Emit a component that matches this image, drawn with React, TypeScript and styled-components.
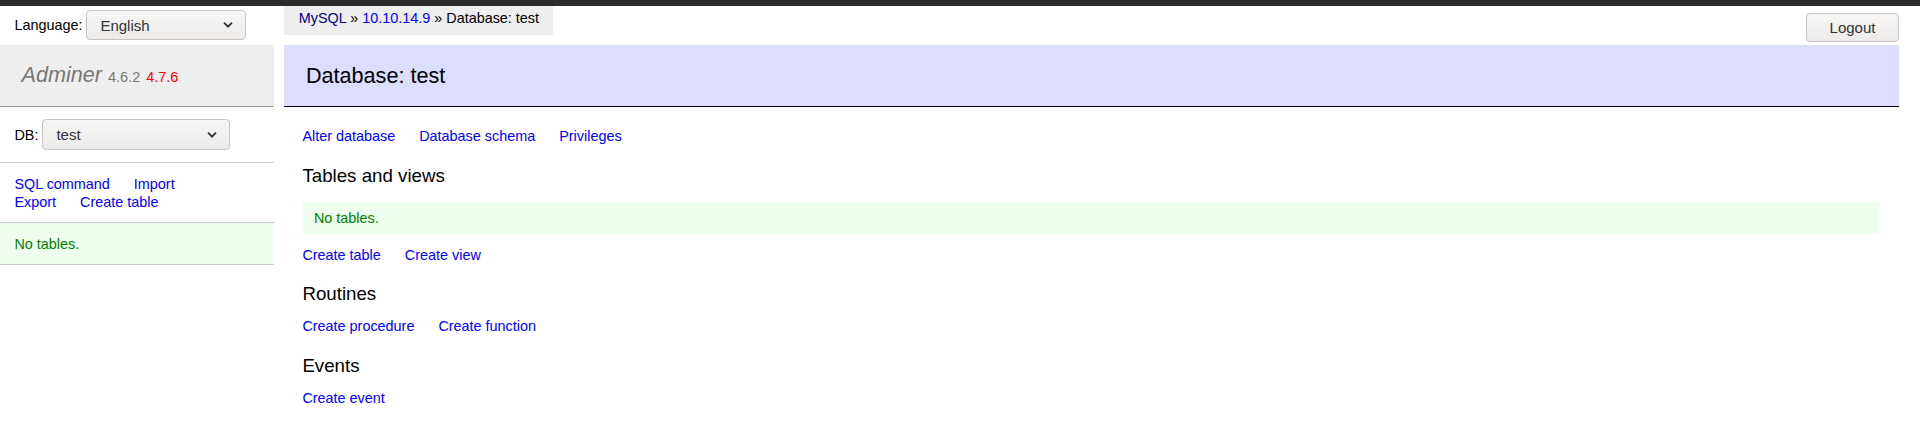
import React from "react";
import styled, { createGlobalStyle } from "styled-components";

const GlobalStyle = createGlobalStyle`
  html, body { margin: 0; padding: 0; background: #fff; }
  body {
    color: #000;
    font: 14.4px/1.25 "Liberation Sans", Arial, Helvetica, sans-serif;
  }
`;

const ChromeBar = styled.div`
  height: 6px;
  background: #2b2b2b;
`;

const Page = styled.div`
  display: flex;
  align-items: flex-start;
`;

const Sidebar = styled.aside`
  width: 273.6px;
  flex: none;
`;

const LangRow = styled.div`
  height: 38.8px;
  box-sizing: border-box;
  display: flex;
  align-items: center;
  gap: 4px;
  padding: 0 14.4px;
`;

const SelectWrap = styled.div<{ $width: number; $height: number }>`
  position: relative;
  width: ${(p) => p.$width}px;
  height: ${(p) => p.$height}px;
  flex: none;
`;

const NativeSelect = styled.select`
  appearance: none;
  -webkit-appearance: none;
  display: block;
  width: 100%;
  height: 100%;
  box-sizing: border-box;
  border: 1px solid #c8c5c1;
  border-radius: 4px;
  background: linear-gradient(#f7f6f5, #edebe9);
  font: 15px "Liberation Sans", Arial, sans-serif;
  color: #2e3436;
  padding: 0 30px 0 13px;
  outline: none;
`;

const Chevron = styled.svg`
  position: absolute;
  right: 13px;
  top: 50%;
  transform: translateY(-50%);
  pointer-events: none;
`;

const Brand = styled.h1`
  font-size: 21.6px;
  line-height: 1.25;
  margin: 0;
  padding: 17.28px 21.6px;
  border-bottom: 1px solid #999;
  font-weight: normal;
  color: #777;
  background: #eee;
`;

const BrandName = styled.a`
  color: #777;
  font-style: italic;
  text-decoration: none;
`;

const Version = styled.span<{ $new?: boolean }>`
  font-size: 67%;
  line-height: 1;
  color: ${(p) => (p.$new ? "red" : "#777")};
`;

const MenuBlock = styled.div<{ $message?: boolean }>`
  padding: 11.52px 14.4px;
  margin: 0;
  border-bottom: 1px solid #ccc;
  color: ${(p) => (p.$message ? "green" : "#000")};
  background: ${(p) => (p.$message ? "#efe" : "transparent")};
`;

const DbForm = styled.div`
  display: flex;
  align-items: center;
  gap: 4px;
  height: 32px;
`;

const Main = styled.main`
  flex: 1;
  min-width: 0;
  margin-left: 28.8px;
  padding-right: 21px;
`;

const TopRow = styled.div`
  display: flex;
  justify-content: space-between;
  align-items: flex-start;
  height: 38.8px;
`;

const Breadcrumb = styled.nav`
  margin-left: -18px;
  background: #eee;
  height: 28.8px;
  line-height: 25.92px;
  padding: 0 14.4px;
  white-space: nowrap;
`;

const Link = styled.a<{ $visited?: boolean }>`
  color: ${(p) => (p.$visited ? "navy" : "blue")};
  text-decoration: none;
`;

const LogoutButton = styled.button`
  margin-top: 7px;
  width: 93px;
  height: 29px;
  box-sizing: border-box;
  border: 1px solid #c8c5c1;
  border-radius: 4px;
  background: linear-gradient(#f7f6f5, #edebe9);
  color: #2e3436;
  font: 15px "Liberation Sans", Arial, sans-serif;
  padding: 0;
`;

const Title = styled.h2`
  font-size: 21.6px;
  line-height: 27px;
  margin: 0 0 20px -18px;
  padding: 17.28px 21.6px;
  border-bottom: 1px solid #000;
  color: #000;
  font-weight: normal;
  background: #ddf;
`;

const SectionTitle = styled.h3`
  font-weight: normal;
  font-size: 18.72px;
  line-height: 23.4px;
  margin: 18.72px 0 0;
`;

const Links = styled.p`
  margin: 11.52px 20px 0 0;
`;

const LinkItem = styled.a`
  color: blue;
  text-decoration: none;
  white-space: nowrap;
  margin-right: 20px;
`;

const SideLinks = styled.p`
  margin: 0;
  padding: 11.52px 14.4px;
  border-bottom: 1px solid #ccc;
`;

const Message = styled.div`
  padding: 7.2px 11.52px;
  margin: 14.4px 20px 0 0;
  color: green;
  background: #efe;
`;

function Select({ width, height, value }: { width: number; height: number; value: string }) {
  return (
    <SelectWrap $width={width} $height={height}>
      <NativeSelect defaultValue={value}>
        <option>{value}</option>
      </NativeSelect>
      <Chevron width="10" height="7" viewBox="0 0 10 7">
        <path d="M1 1.2 L5 5.2 L9 1.2" fill="none" stroke="#2e3436" strokeWidth="1.8" />
      </Chevron>
    </SelectWrap>
  );
}

function LinkList({ items }: { items: string[] }) {
  return (
    <>
      {items.map((t, i) => (
        <React.Fragment key={t}>
          <LinkItem href="#">{t}</LinkItem>
          {i < items.length - 1 ? " " : null}
        </React.Fragment>
      ))}
    </>
  );
}

const sections = [
  { title: "Tables and views", message: "No tables.", links: ["Create table", "Create view"] },
  { title: "Routines", links: ["Create procedure", "Create function"] },
  { title: "Events", links: ["Create event"] },
];

export default function App() {
  return (
    <>
      <GlobalStyle />
      <ChromeBar />
      <Page>
        <Sidebar>
          <LangRow>
            <span>Language:</span>
            <Select width={160} height={30} value="English" />
          </LangRow>
          <Brand>
            <BrandName href="#">Adminer</BrandName> <Version>4.6.2</Version>{" "}
            <Version $new>4.7.6</Version>
          </Brand>
          <MenuBlock>
            <DbForm>
              <span>DB:</span>
              <Select width={187.5} height={31} value="test" />
            </DbForm>
          </MenuBlock>
          <SideLinks>
            <LinkList items={["SQL command", "Import", "Export", "Create table"]} />
          </SideLinks>
          <MenuBlock $message>No tables.</MenuBlock>
        </Sidebar>
        <Main>
          <TopRow>
            <Breadcrumb>
              <Link href="#" $visited>MySQL</Link> » <Link href="#">10.10.14.9</Link> » Database: test
            </Breadcrumb>
            <LogoutButton>Logout</LogoutButton>
          </TopRow>
          <Title>Database: test</Title>
          <Links>
            <LinkList items={["Alter database", "Database schema", "Privileges"]} />
          </Links>
          {sections.map((s) => (
            <React.Fragment key={s.title}>
              <SectionTitle>{s.title}</SectionTitle>
              {s.message ? <Message>{s.message}</Message> : null}
              <Links>
                <LinkList items={s.links} />
              </Links>
            </React.Fragment>
          ))}
        </Main>
      </Page>
    </>
  );
}
